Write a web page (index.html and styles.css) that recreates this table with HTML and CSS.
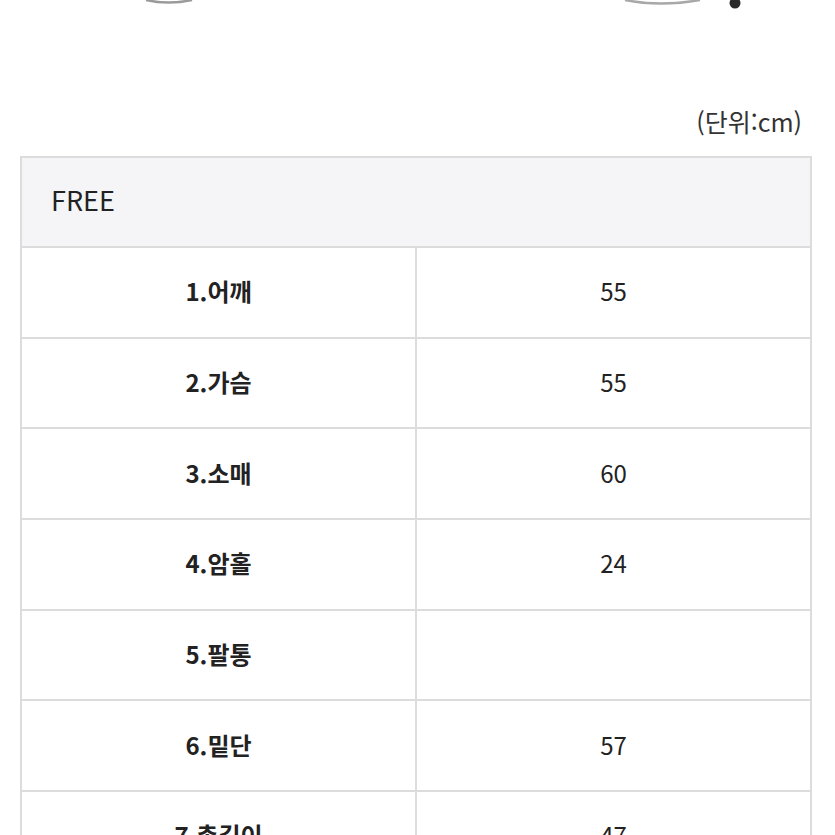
FILE: index.html
```html
<!DOCTYPE html>
<html lang="ko">
<head>
<meta charset="utf-8">
<link rel="stylesheet" href="styles.css">
</head>
<body>
<div class="photo">
<svg width="835" height="20" viewBox="0 0 835 20">
<path d="M146 0 Q168 5 192 0" fill="none" stroke="#9a9a9a" stroke-width="2.5"/>
<path d="M625 0 Q660 7 700 0" fill="none" stroke="#a8a8a8" stroke-width="2.5"/>
<ellipse cx="735" cy="3" rx="5.5" ry="5.5" fill="#2a2a2a"/>
</svg>
</div>
<p class="unit">(단위:cm)</p>
<table class="size">
<tr><th colspan="2" class="head">FREE</th></tr>
<tr><td class="label">1.어깨</td><td class="val">55</td></tr>
<tr><td class="label">2.가슴</td><td class="val">55</td></tr>
<tr><td class="label">3.소매</td><td class="val">60</td></tr>
<tr><td class="label">4.암홀</td><td class="val">24</td></tr>
<tr><td class="label">5.팔통</td><td class="val"></td></tr>
<tr><td class="label">6.밑단</td><td class="val">57</td></tr>
<tr><td class="label">7.총길이</td><td class="val">47</td></tr>
</table>
</body>
</html>
```
FILE: styles.css
```css
html, body {
  margin: 0;
  padding: 0;
  background: #fff;
  font-family: "Noto Sans CJK KR", "Noto Sans", sans-serif;
  color: #222;
}
.photo {
  height: 20px;
  overflow: hidden;
}
.photo svg {
  display: block;
}
.unit {
  margin: 0;
  padding: 86px 33px 0 0;
  text-align: right;
  font-size: 25px;
  line-height: 30px;
  color: #333;
}
.size {
  margin: 20px 0 0 20px;
  width: 792px;
  border-collapse: collapse;
  table-layout: fixed;
}
.size th, .size td {
  border: 2px solid #dcdcdc;
  height: 85.7px;
  padding: 0 0 3px 0;
  font-size: 24px;
}
.size th.head {
  height: 82px;
  background: #f5f5f7;
  text-align: left;
  font-weight: 400;
  font-size: 27px;
  padding: 0 0 6px 29px;
  color: #222;
}
.label {
  width: 394px;
  text-align: center;
  font-weight: 700;
}
.val {
  text-align: center;
  font-weight: 400;
}
```
